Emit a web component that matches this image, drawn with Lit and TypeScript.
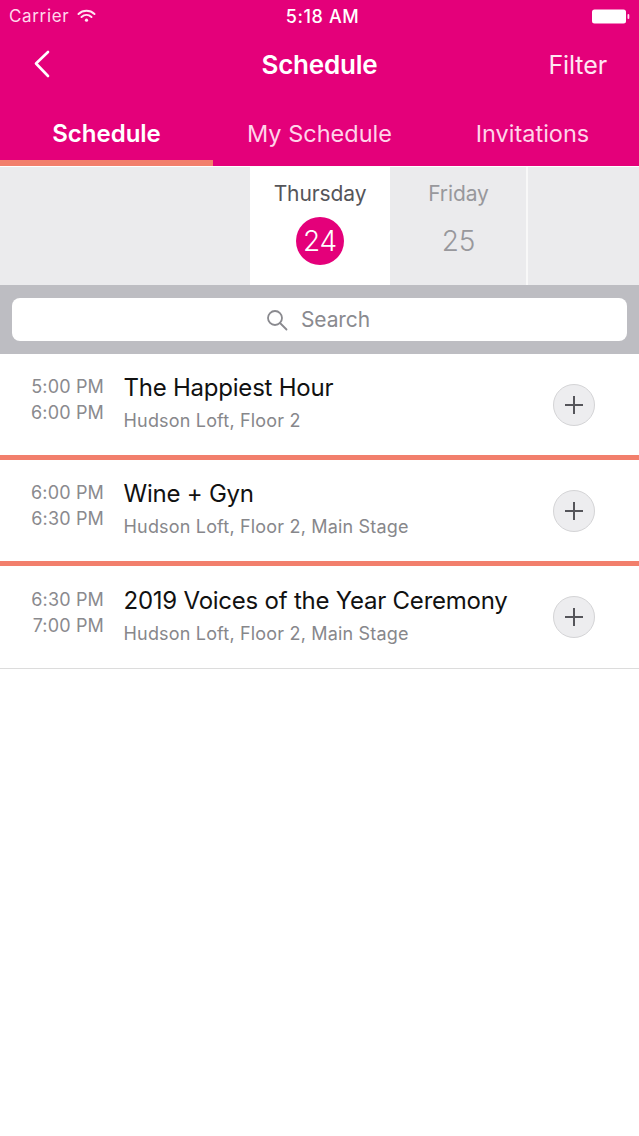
import {LitElement, html, css} from 'lit';
import {customElement} from 'lit/decorators.js';

const events = [
  {start: '5:00 PM', end: '6:00 PM', title: 'The Happiest Hour', place: 'Hudson Loft, Floor 2'},
  {start: '6:00 PM', end: '6:30 PM', title: 'Wine + Gyn', place: 'Hudson Loft, Floor 2, Main Stage'},
  {start: '6:30 PM', end: '7:00 PM', title: '2019 Voices of the Year Ceremony', place: 'Hudson Loft, Floor 2, Main Stage'},
];

@customElement('app-root')
class AppRoot extends LitElement {
  static override styles = css`
    :host {
      display: block;
      width: 639px;
      height: 1136px;
      background: white;
      font-family: Inter, 'Liberation Sans', sans-serif;
      overflow: hidden;
    }

    .header {
      background: #e4007a;
      color: white;
      height: 166px;
      display: flex;
      flex-direction: column;
    }

    .status {
      height: 32px;
      padding: 0 9px;
      display: flex;
      align-items: center;
      font-size: 17px;
      letter-spacing: 0.65px;
      color: #ffd9ec;
    }

    .status__left {
      flex: 1;
      display: flex;
      align-items: center;
      gap: 8px;
    }

    .status__time {
      font-weight: 500;
      color: white;
      font-size: 18px;
      letter-spacing: 0.6px;
      margin-left: 6px;
    }

    .status__right {
      flex: 1;
      display: flex;
      justify-content: flex-end;
    }

    .nav {
      height: 66px;
      padding: 0 32px 0 33px;
      display: flex;
      align-items: center;
      justify-content: space-between;
      position: relative;
    }

    .nav__title {
      position: absolute;
      left: 0;
      right: 0;
      padding-bottom: 2px;
      text-align: center;
      font-size: 26px;
      font-weight: 600;
      letter-spacing: -0.2px;
    }

    .nav__filter {
      font-size: 25px;
      letter-spacing: -0.1px;
      color: #ffe6f2;
    }

    .tabs {
      flex: 1;
      display: flex;
    }

    .tab {
      flex: 1;
      display: flex;
      align-items: flex-start;
      justify-content: center;
      padding-top: 21px;
      font-size: 23.5px;
      color: #ffd4e9;
      box-sizing: border-box;
    }

    .tab--active {
      color: white;
      font-size: 24px;
      font-weight: 600;
      border-bottom: 6px solid #f27f6c;
    }

    .days {
      height: 118px;
      margin-top: 1px;
      background: #ebebed;
      display: flex;
      padding-left: 250px;
    }

    .day {
      display: flex;
      flex-direction: column;
      align-items: center;
      box-sizing: border-box;
      padding-top: 14px;
      font-size: 21px;
      letter-spacing: -0.1px;
      color: #98989c;
    }

    .day--active {
      width: 140px;
      background: white;
      color: #55555a;
    }

    .day--next {
      width: 137px;
      margin-left: 1px;
      border-right: 2px solid #f8f8f8;
    }

    .day__num {
      width: 48px;
      height: 48px;
      margin-top: 11px;
      border-radius: 50%;
      display: flex;
      align-items: center;
      justify-content: center;
      font-size: 28px;
      font-weight: 300;
    }

    .day--active .day__num {
      background: #e4007a;
      color: white;
    }

    .search {
      height: 69px;
      background: #bdbdc2;
      padding: 13px 12px;
      box-sizing: border-box;
    }

    .search__field {
      height: 43px;
      background: white;
      border-radius: 8px;
      display: flex;
      align-items: center;
      justify-content: center;
      gap: 13px;
      font-size: 21px;
      letter-spacing: -0.1px;
      color: #8a8a8f;
      padding-right: 3px;
    }

    .row {
      height: 101px;
      display: flex;
      border-bottom: 5px solid #f27f6c;
    }

    .row:last-child {
      height: 102px;
      border-bottom: 1px solid #dcdcdc;
    }

    .row__time {
      width: 104px;
      padding-top: 20px;
      text-align: right;
      font-size: 18px;
      letter-spacing: 0.15px;
      line-height: 25.5px;
      color: #8a8a8e;
      flex: none;
    }

    .row:last-child .row__time {
      padding-top: 21px;
    }

    .row__body {
      flex: 1;
      padding: 19px 0 0 20px;
      margin-left: -0.5px;
    }

    .row:last-child .row__body {
      padding-top: 20px;
    }

    .row__title {
      font-size: 24px;
      letter-spacing: -0.23px;
      line-height: 30px;
      color: #111;
    }

    .row__place {
      margin-top: 6px;
      font-size: 18px;
      letter-spacing: 0.18px;
      line-height: 24px;
      color: #87878b;
    }

    .row__add {
      flex: none;
      width: 40px;
      height: 40px;
      margin: 30px 44px 0 0;
      border-radius: 50%;
      border: 1px solid #d4d4d6;
      background: #ededef;
      display: flex;
      align-items: center;
      justify-content: center;
    }
  `;

  override render() {
    return html`
      <div class="header">
        <div class="status">
          <div class="status__left">
            <span>Carrier</span>
            <svg width="19" height="14" viewBox="0 0 19 14" fill="none" stroke="#ffe6f2" stroke-width="2" stroke-linecap="round">
              <path d="M1.5 5 C6 0.8 13 0.8 17.5 5" />
              <path d="M4.5 8 C7.5 5.3 11.5 5.3 14.5 8" />
              <circle cx="9.5" cy="11.2" r="1.6" fill="#ffe6f2" stroke="none" />
            </svg>
          </div>
          <span class="status__time">5:18 AM</span>
          <div class="status__right">
            <svg width="38" height="15" viewBox="0 0 38 15">
              <rect x="0" y="0.5" width="34" height="14" rx="2.5" fill="white" />
              <rect x="35.5" y="5" width="1.8" height="5" rx="0.9" fill="#ffd9ec" />
            </svg>
          </div>
        </div>
        <div class="nav">
          <svg width="18" height="30" viewBox="0 0 18 30" fill="none" stroke="white" stroke-width="2.6" stroke-linecap="round" stroke-linejoin="round">
            <path d="M15 2 L3 13.5 L15 26" />
          </svg>
          <span class="nav__title">Schedule</span>
          <span class="nav__filter">Filter</span>
        </div>
        <div class="tabs">
          <div class="tab tab--active">Schedule</div>
          <div class="tab">My Schedule</div>
          <div class="tab">Invitations</div>
        </div>
      </div>
      <div class="days">
        <div class="day day--active">
          <span>Thursday</span>
          <span class="day__num">24</span>
        </div>
        <div class="day day--next">
          <span>Friday</span>
          <span class="day__num">25</span>
        </div>
      </div>
      <div class="search">
        <div class="search__field">
          <svg width="22" height="22" viewBox="0 0 22 22" fill="none" stroke="#8a8a8f" stroke-width="1.8" stroke-linecap="round">
            <circle cx="9" cy="9" r="7" />
            <path d="M14 14 L20.5 20.5" />
          </svg>
          <span>Search</span>
        </div>
      </div>
      ${events.map(
        (e) => html`
          <div class="row">
            <div class="row__time">${e.start}<br />${e.end}</div>
            <div class="row__body">
              <div class="row__title">${e.title}</div>
              <div class="row__place">${e.place}</div>
            </div>
            <div class="row__add">
              <svg width="20" height="20" viewBox="0 0 20 20" stroke="#55555a" stroke-width="2">
                <path d="M10 1 V19 M1 10 H19" />
              </svg>
            </div>
          </div>
        `
      )}
    `;
  }
}

declare global {
  interface HTMLElementTagNameMap {
    'app-root': AppRoot;
  }
}
